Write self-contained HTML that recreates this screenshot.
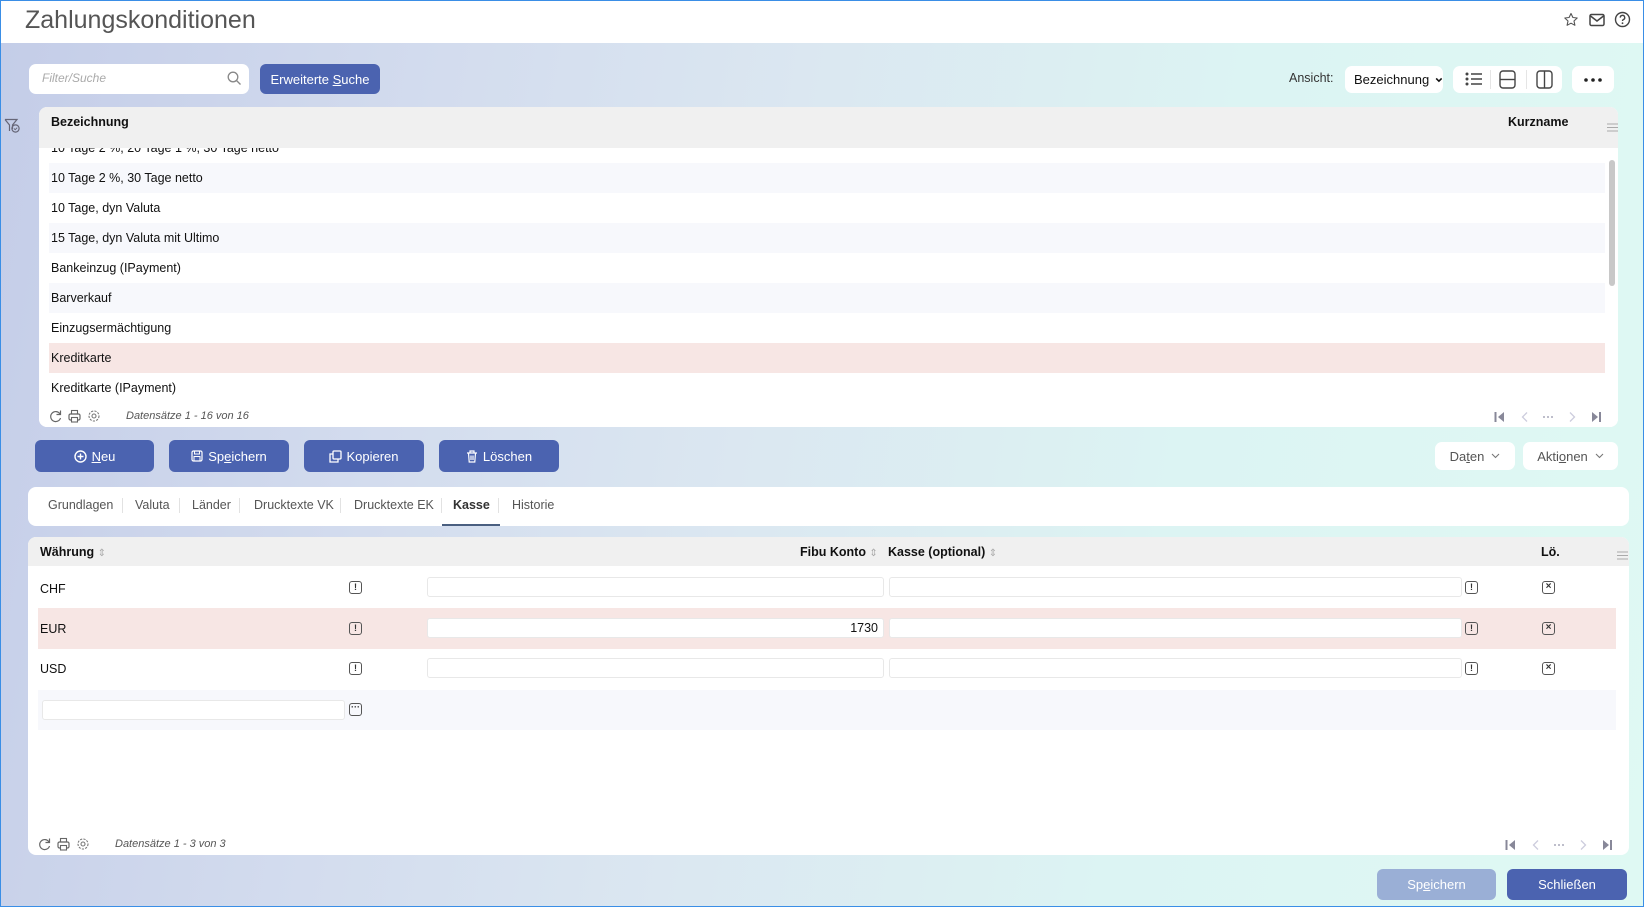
<!DOCTYPE html>
<html><head><meta charset="utf-8">
<style>
*{box-sizing:border-box;margin:0;padding:0}
body{width:1644px;height:907px;overflow:hidden;font-family:"Liberation Sans",sans-serif;font-size:13px;color:#111;position:relative;background:#fff}
.frame{position:absolute;left:0;top:0;width:1644px;height:907px;border:1px solid #3a8ee6;z-index:50;pointer-events:none}
.bg{position:absolute;left:0;top:43px;width:1644px;height:864px;background:linear-gradient(100deg,#c4cde8 0%,#d3dcee 25%,#dbe7f1 45%,#dcf4f3 70%,#dff9f3 100%)}
.abs{position:absolute}
.title{left:25px;top:6px;font-size:25px;color:#555}
.btn{position:absolute;background:#4b63b0;color:#fff;border-radius:6px;display:flex;align-items:center;justify-content:center;font-size:13px}
.wbtn{position:absolute;background:#fff;border-radius:7px;display:flex;align-items:center;justify-content:center;font-size:13px;color:#555}
.panel{position:absolute;background:#fff;border-radius:8px;overflow:hidden}
.row{position:absolute;left:10px;width:1556px;height:30px;line-height:30px;padding-left:2px;font-size:12.5px}
.alt{background:#f7f8fc}
.hl{background:#f7e6e4}
.ibox{position:absolute;width:13px;height:13px;border:1.5px solid #555;border-radius:3px;font-size:9px;font-weight:bold;line-height:10px;text-align:center;color:#333}
.inp{position:absolute;background:#fff;border:1px solid #e8e8e8;border-radius:3px;height:20px}
.tab{position:absolute;top:498px;font-size:12.5px;color:#555}
.sep{position:absolute;top:498px;width:1px;height:15px;background:#e2e2e2}
.foot{font-size:11px;font-style:italic;color:#555}
</style></head><body>
<div class="bg"></div>
<div class="abs title">Zahlungskonditionen</div>
<svg class="abs" style="left:1563px;top:12px" width="16" height="16" viewBox="0 0 16 16"><path d="M8 1.5l1.9 4 4.3.5-3.2 3 .9 4.3L8 11.2 4.1 13.3 5 9 1.8 6l4.3-.5z" fill="none" stroke="#555" stroke-width="1.1" stroke-linejoin="round"/></svg>
<svg class="abs" style="left:1589px;top:13px" width="16" height="14" viewBox="0 0 16 14"><rect x="1" y="1.5" width="14" height="11" rx="1.5" fill="none" stroke="#444" stroke-width="1.5"/><path d="M1.5 3l6.5 5 6.5-5" fill="none" stroke="#444" stroke-width="1.5"/></svg>
<svg class="abs" style="left:1614px;top:11px" width="17" height="17" viewBox="0 0 17 17"><circle cx="8.5" cy="8.5" r="7" fill="none" stroke="#444" stroke-width="1.4"/><path d="M6.3 6.6a2.2 2.2 0 1 1 3 2c-.7.3-.8.8-.8 1.4" fill="none" stroke="#444" stroke-width="1.4"/><circle cx="8.5" cy="12.2" r=".9" fill="#444"/></svg>

<div class="abs" style="left:29px;top:64px;width:220px;height:30px;background:#fff;border-radius:7px"></div>
<div class="abs" style="left:42px;top:71px;font-size:12px;font-style:italic;color:#aaa">Filter/Suche</div>
<svg class="abs" style="left:227px;top:71px" width="15" height="15" viewBox="0 0 15 15"><circle cx="6" cy="6" r="4.8" fill="none" stroke="#888" stroke-width="1.3"/><path d="M9.5 9.5l4 4" stroke="#888" stroke-width="1.3"/></svg>
<div class="btn" style="left:260px;top:64px;width:120px;height:30px">Erweiterte&nbsp;<u>S</u>uche</div>

<div class="abs" style="left:1289px;top:71px;font-size:12.5px;color:#333">Ansicht:</div>
<div class="wbtn" style="left:1345px;top:66px;width:98px;height:27px;color:#111;justify-content:flex-start;padding-left:9px">Bezeichnung<svg width="10" height="8" style="margin-left:6px" viewBox="0 0 10 8"><path d="M1.5 2l3.5 3.5L8.5 2" fill="none" stroke="#111" stroke-width="2"/></svg></div>
<div class="wbtn" style="left:1453px;top:66px;width:109px;height:27px"></div>
<svg class="abs" style="left:1465px;top:71px" width="18" height="16" viewBox="0 0 18 16"><g fill="#444"><circle cx="2" cy="3" r="1.5"/><circle cx="2" cy="8" r="1.5"/><circle cx="2" cy="13" r="1.5"/></g><g stroke="#444" stroke-width="1.5"><path d="M6 3h11M6 8h11M6 13h11"/></g></svg>
<div class="abs" style="left:1490px;top:70px;width:1px;height:19px;background:#e5e5e5"></div>
<svg class="abs" style="left:1499px;top:70px" width="17" height="19" viewBox="0 0 17 19"><rect x="1" y="1" width="15" height="17" rx="3" fill="none" stroke="#444" stroke-width="1.4"/><path d="M1 9.5h15" stroke="#444" stroke-width="1.4"/></svg>
<div class="abs" style="left:1526px;top:70px;width:1px;height:19px;background:#e5e5e5"></div>
<svg class="abs" style="left:1536px;top:70px" width="17" height="19" viewBox="0 0 17 19"><rect x="1" y="1" width="15" height="17" rx="3" fill="none" stroke="#444" stroke-width="1.4"/><path d="M8.5 1v17" stroke="#444" stroke-width="1.4"/></svg>
<div class="wbtn" style="left:1572px;top:66px;width:42px;height:27px"><svg width="18" height="4"><circle cx="2" cy="2" r="1.8" fill="#222"/><circle cx="9" cy="2" r="1.8" fill="#222"/><circle cx="16" cy="2" r="1.8" fill="#222"/></svg></div>

<svg class="abs" style="left:4px;top:118px" width="17" height="16" viewBox="0 0 17 16"><path d="M1 1.5h12l-4.5 5.5v4" fill="none" stroke="#667" stroke-width="1.2"/><path d="M1 1.5l4.5 5.5v6" fill="none" stroke="#667" stroke-width="1.2"/><circle cx="11.5" cy="10.5" r="3.6" fill="none" stroke="#667" stroke-width="1.2"/><path d="M10 10.5l1.2 1.2 2-2" fill="none" stroke="#667" stroke-width="1"/></svg>

<div class="panel" style="left:39px;top:107px;width:1579px;height:320px">
  <div class="abs" style="left:0;top:0;width:1579px;height:41px;background:#f0f0f0"></div>
  <div class="abs" style="left:12px;top:8px;font-weight:bold;font-size:12.5px">Bezeichnung</div>
  <div class="abs" style="left:1469px;top:8px;font-weight:bold;font-size:12.5px">Kurzname</div>
  <svg class="abs" style="left:1568px;top:16px" width="11" height="9"><path d="M0 1h11M0 4.5h11M0 8h11" stroke="#aaa" stroke-width="1"/></svg>
  <div class="abs" style="left:0;top:41px;width:1579px;height:254px;overflow:hidden">
    <div class="row" style="top:-15px">10 Tage 2 %, 20 Tage 1 %, 30 Tage netto</div>
    <div class="row alt" style="top:15px">10 Tage 2 %, 30 Tage netto</div>
    <div class="row" style="top:45px">10 Tage, dyn Valuta</div>
    <div class="row alt" style="top:75px">15 Tage, dyn Valuta mit Ultimo</div>
    <div class="row" style="top:105px">Bankeinzug (IPayment)</div>
    <div class="row alt" style="top:135px">Barverkauf</div>
    <div class="row" style="top:165px">Einzugsermächtigung</div>
    <div class="row hl" style="top:195px">Kreditkarte</div>
    <div class="row" style="top:225px">Kreditkarte (IPayment)</div>
  </div>
  <div class="abs" style="left:1570px;top:53px;width:6px;height:126px;background:#c8c8c8;border-radius:3px"></div>
  <div class="abs" style="left:0;top:295px;width:1579px;height:25px;background:#fff"></div>
  <svg class="abs" style="left:10px;top:302px" width="56" height="14" viewBox="0 0 56 14"><path d="M11 5A5 5 0 1 0 11.5 9" fill="none" stroke="#666" stroke-width="1.2"/><path d="M11.5 1.5v4h-4" fill="none" stroke="#666" stroke-width="1.2"/><rect x="20" y="5" width="11" height="6" rx="1.5" fill="none" stroke="#666" stroke-width="1.2"/><rect x="22.5" y="1.5" width="6" height="3.5" fill="none" stroke="#666" stroke-width="1.1"/><rect x="22.5" y="8.5" width="6" height="4.5" fill="#fff" stroke="#666" stroke-width="1.1"/><circle cx="45" cy="7" r="2" fill="none" stroke="#777" stroke-width="1.1"/><circle cx="45" cy="7" r="5" fill="none" stroke="#777" stroke-width="1.1" stroke-dasharray="2.2 1.2"/></svg>
  <div class="abs foot" style="left:87px;top:303px">Datensätze 1 - 16 von 16</div>
  <svg class="abs" style="left:1455px;top:304px" width="110" height="12" viewBox="0 0 110 12"><path d="M1.5 1v10" stroke="#889" stroke-width="2"/><path d="M10 1L4 6l6 5z" fill="#889"/><path d="M33 1.5L28.5 6 33 10.5" fill="none" stroke="#ccd" stroke-width="1.3"/><g fill="#aab"><circle cx="50" cy="6" r="1"/><circle cx="54" cy="6" r="1"/><circle cx="58" cy="6" r="1"/></g><path d="M76 1.5L80.5 6 76 10.5" fill="none" stroke="#ccd" stroke-width="1.3"/><path d="M98 1l6 5-6 5z" fill="#889"/><path d="M106 1v10" stroke="#889" stroke-width="2"/></svg>
</div>

<div class="btn" style="left:35px;top:440px;width:119px;height:32px"><svg width="13" height="13" style="margin-right:5px"><circle cx="6.5" cy="6.5" r="5.5" fill="none" stroke="#fff" stroke-width="1.4"/><path d="M6.5 3.5v6M3.5 6.5h6" stroke="#fff" stroke-width="1.4"/></svg><u>N</u>eu</div>
<div class="btn" style="left:169px;top:440px;width:120px;height:32px"><svg width="12" height="12" style="margin-right:5px"><rect x="1" y="1" width="10" height="10" rx="1.5" fill="none" stroke="#fff" stroke-width="1.2"/><rect x="3.5" y="1" width="5" height="3" fill="none" stroke="#fff" stroke-width="1"/><rect x="3" y="6.5" width="6" height="4.5" fill="none" stroke="#fff" stroke-width="1"/></svg>Sp<u>e</u>ichern</div>
<div class="btn" style="left:304px;top:440px;width:120px;height:32px"><svg width="13" height="13" style="margin-right:4px"><rect x="4" y="1" width="8" height="8" rx="1" fill="none" stroke="#fff" stroke-width="1.3"/><path d="M4 4H1v8h8V9" fill="none" stroke="#fff" stroke-width="1.3"/></svg>Kopieren</div>
<div class="btn" style="left:439px;top:440px;width:120px;height:32px"><svg width="12" height="13" style="margin-right:5px"><path d="M1 3h10M4 3V1h4v2M2.5 3l.7 9h5.6l.7-9M5 5.5v4.5M7 5.5v4.5" fill="none" stroke="#fff" stroke-width="1.2"/></svg>Löschen</div>
<div class="wbtn" style="left:1435px;top:442px;width:80px;height:28px">Da<u>t</u>en<svg width="9" height="6" style="margin-left:7px" viewBox="0 0 9 6"><path d="M1 1l3.5 3.5L8 1" fill="none" stroke="#777" stroke-width="1.1"/></svg></div>
<div class="wbtn" style="left:1523px;top:442px;width:95px;height:28px">Akti<u>o</u>nen<svg width="9" height="6" style="margin-left:7px" viewBox="0 0 9 6"><path d="M1 1l3.5 3.5L8 1" fill="none" stroke="#777" stroke-width="1.1"/></svg></div>

<div class="panel" style="left:28px;top:487px;width:1601px;height:39px"></div>
<div class="tab" style="left:48px">Grundlagen</div><div class="sep" style="left:122px"></div>
<div class="tab" style="left:135px">Valuta</div><div class="sep" style="left:179px"></div>
<div class="tab" style="left:192px">Länder</div><div class="sep" style="left:239px"></div>
<div class="tab" style="left:254px">Drucktexte VK</div><div class="sep" style="left:340px"></div>
<div class="tab" style="left:354px">Drucktexte EK</div><div class="sep" style="left:441px"></div>
<div class="tab" style="left:453px;font-weight:bold;color:#333">Kasse</div><div class="sep" style="left:498px"></div>
<div class="tab" style="left:512px">Historie</div>
<div class="abs" style="left:442px;top:524px;width:58px;height:2px;background:#4a5f80"></div>

<div class="panel" style="left:28px;top:537px;width:1601px;height:318px">
  <div class="abs" style="left:0;top:0;width:1601px;height:29px;background:#f0f0f0"></div>
  <div class="abs" style="left:12px;top:8px;font-weight:bold;font-size:12.5px">Währung <span style="color:#aaa;font-weight:normal;font-size:10px">&#8661;</span></div>
  <div class="abs" style="left:772px;top:8px;font-weight:bold;font-size:12.5px">Fibu Konto <span style="color:#aaa;font-weight:normal;font-size:10px">&#8661;</span></div>
  <div class="abs" style="left:860px;top:8px;font-weight:bold;font-size:12.5px">Kasse (optional) <span style="color:#aaa;font-weight:normal;font-size:10px">&#8661;</span></div>
  <div class="abs" style="left:1513px;top:8px;font-weight:bold;font-size:12.5px">Lö.</div>
  <svg class="abs" style="left:1589px;top:14px" width="11" height="9"><path d="M0 1h11M0 4.5h11M0 8h11" stroke="#aaa" stroke-width="1"/></svg>

  <div class="abs" style="left:10px;top:71px;width:1578px;height:41px;background:#f7e6e4"></div>
  <div class="abs" style="left:10px;top:153px;width:1578px;height:40px;background:#f7f8fc"></div>

  <div class="abs" style="left:12px;top:45px;font-size:12.5px">CHF</div>
  <div class="abs" style="left:12px;top:85px;font-size:12.5px">EUR</div>
  <div class="abs" style="left:12px;top:125px;font-size:12.5px">USD</div>

  <div class="ibox" style="left:321px;top:44px">!</div>
  <div class="ibox" style="left:321px;top:85px">!</div>
  <div class="ibox" style="left:321px;top:125px">!</div>
  <div class="ibox" style="left:321px;top:166px;line-height:7px">···</div>

  <div class="inp" style="left:399px;top:40px;width:457px"></div>
  <div class="inp" style="left:399px;top:81px;width:457px;text-align:right;padding-right:5px;line-height:18px;font-size:12.5px">1730</div>
  <div class="inp" style="left:399px;top:121px;width:457px"></div>
  <div class="inp" style="left:861px;top:40px;width:573px"></div>
  <div class="inp" style="left:861px;top:81px;width:573px"></div>
  <div class="inp" style="left:861px;top:121px;width:573px"></div>
  <div class="inp" style="left:14px;top:163px;width:303px"></div>

  <div class="ibox" style="left:1437px;top:44px">!</div>
  <div class="ibox" style="left:1437px;top:85px">!</div>
  <div class="ibox" style="left:1437px;top:125px">!</div>
  <div class="ibox" style="left:1514px;top:44px;font-size:10px">×</div>
  <div class="ibox" style="left:1514px;top:85px;font-size:10px">×</div>
  <div class="ibox" style="left:1514px;top:125px;font-size:10px">×</div>

  <svg class="abs" style="left:10px;top:300px" width="56" height="14" viewBox="0 0 56 14"><path d="M11 5A5 5 0 1 0 11.5 9" fill="none" stroke="#666" stroke-width="1.2"/><path d="M11.5 1.5v4h-4" fill="none" stroke="#666" stroke-width="1.2"/><rect x="20" y="5" width="11" height="6" rx="1.5" fill="none" stroke="#666" stroke-width="1.2"/><rect x="22.5" y="1.5" width="6" height="3.5" fill="none" stroke="#666" stroke-width="1.1"/><rect x="22.5" y="8.5" width="6" height="4.5" fill="#fff" stroke="#666" stroke-width="1.1"/><circle cx="45" cy="7" r="2" fill="none" stroke="#777" stroke-width="1.1"/><circle cx="45" cy="7" r="5" fill="none" stroke="#777" stroke-width="1.1" stroke-dasharray="2.2 1.2"/></svg>
  <div class="abs foot" style="left:87px;top:301px">Datensätze 1 - 3 von 3</div>
  <svg class="abs" style="left:1477px;top:302px" width="110" height="12" viewBox="0 0 110 12"><path d="M1.5 1v10" stroke="#889" stroke-width="2"/><path d="M10 1L4 6l6 5z" fill="#889"/><path d="M33 1.5L28.5 6 33 10.5" fill="none" stroke="#ccd" stroke-width="1.3"/><g fill="#aab"><circle cx="50" cy="6" r="1"/><circle cx="54" cy="6" r="1"/><circle cx="58" cy="6" r="1"/></g><path d="M76 1.5L80.5 6 76 10.5" fill="none" stroke="#ccd" stroke-width="1.3"/><path d="M98 1l6 5-6 5z" fill="#889"/><path d="M106 1v10" stroke="#889" stroke-width="2"/></svg>
</div>

<div class="btn" style="left:1377px;top:869px;width:119px;height:31px;background:#9aafd6">Sp<u>e</u>ichern</div>
<div class="btn" style="left:1507px;top:869px;width:120px;height:31px">Schließen</div>
<div class="frame"></div>
</body></html>
